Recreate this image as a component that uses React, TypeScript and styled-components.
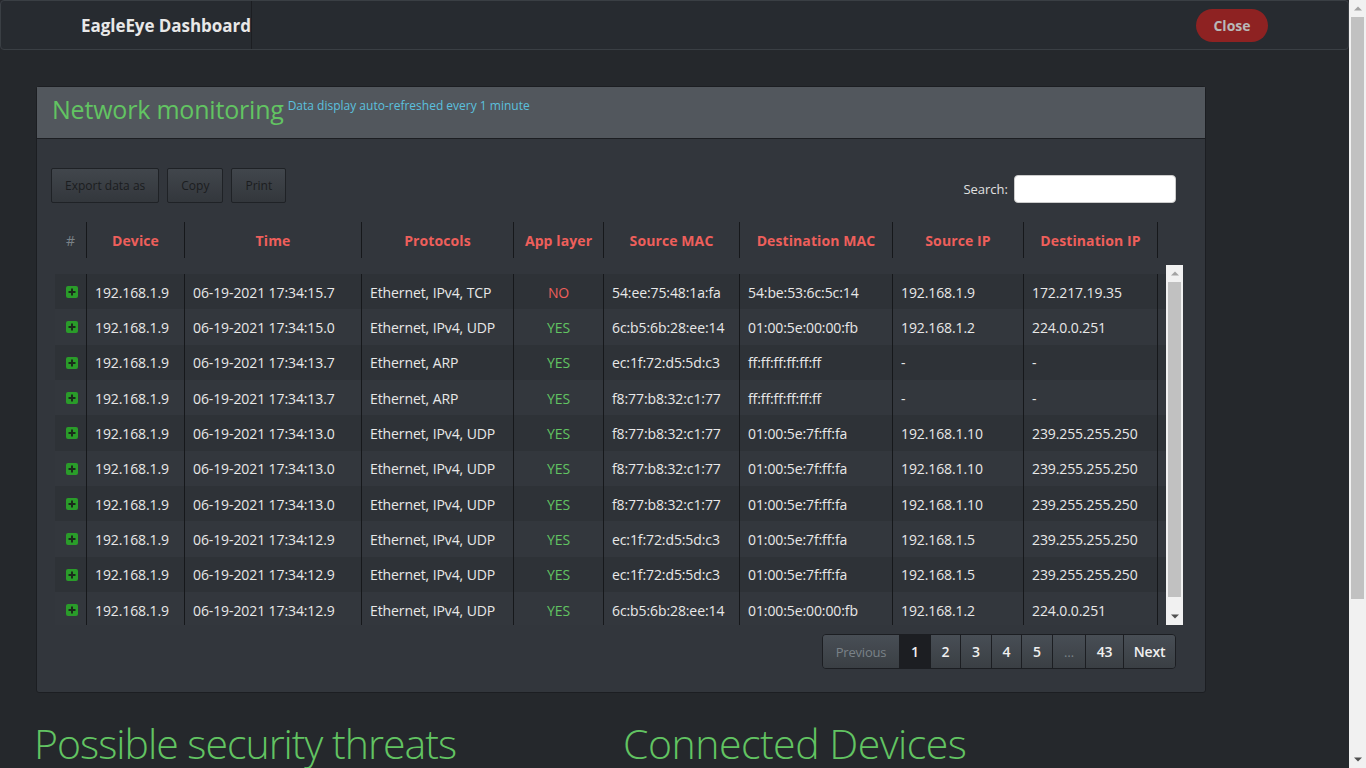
import React from 'react';
import styled, { createGlobalStyle } from 'styled-components';

const GlobalStyle = createGlobalStyle`
  *, *::before, *::after { box-sizing: border-box; }
  html, body {
    margin: 0;
    padding: 0;
    background: #25282c;
    font-family: "Open Sans", "Noto Sans", sans-serif;
    color: #e6e6e6;
    scrollbar-width: none;
  }
  ::-webkit-scrollbar { display: none; }
`;

const Viewport = styled.div`
  display: flex;
  align-items: flex-start;
`;

const Page = styled.div`
  flex: 1;
  min-width: 0;
`;

const Track = styled.div<{ $h: string }>`
  width: 17px;
  height: ${p => p.$h};
  flex-shrink: 0;
  display: flex;
  flex-direction: column;
  background: #f1f1f1;
`;

const PageTrack = styled(Track)`
  position: sticky;
  top: 0;
`;

const Arrow = styled.div`
  height: 17px;
  display: flex;
  align-items: center;
  justify-content: center;
`;

const ThumbArea = styled.div`
  flex: 1;
  padding: 0 2px;
`;

const Thumb = styled.div<{ $h: number }>`
  height: ${p => p.$h}px;
  background: #c1c1c1;
`;

const UpArrow = () => (
  <Arrow>
    <svg width="8" height="5" viewBox="0 0 8 5">
      <path d="M0 4.5L4 0.5L8 4.5Z" fill="#a3a3a3" />
    </svg>
  </Arrow>
);

const DownArrow = () => (
  <Arrow>
    <svg width="8" height="5" viewBox="0 0 8 5">
      <path d="M0 0.5L4 4.5L8 0.5Z" fill="#505050" />
    </svg>
  </Arrow>
);

const Navbar = styled.nav`
  height: 50px;
  display: flex;
  align-items: center;
  justify-content: space-between;
  padding: 0 80px;
  background: #272b30;
  border: 1px solid #3a3f44;
  border-radius: 4px;
`;

const Brand = styled.div`
  height: 48px;
  display: flex;
  align-items: center;
  border-right: 1px solid #1c1e22;
  font-size: 17px;
  font-weight: 700;
  letter-spacing: -0.05px;
  color: #e8e8e8;
`;

const CloseButton = styled.button`
  width: 72px;
  height: 33px;
  border: none;
  border-radius: 17px;
  background: #8e2222;
  color: #b8b8b8;
  font-family: inherit;
  font-size: 14px;
  font-weight: 700;
`;

const Main = styled.main`
  padding: 36px 0 0 36px;
  width: 1206px;
`;

const Panel = styled.section`
  border: 1px solid #1c1e22;
  border-radius: 3px;
  background: #32363c;
`;

const PanelHeader = styled.header`
  height: 52px;
  display: flex;
  align-items: flex-start;
  padding: 0 15px;
  background: #52575d;
  border-bottom: 1px solid #1c1e22;
`;

const Title = styled.h2`
  margin: 5px 0 0;
  font-size: 25px;
  font-weight: 400;
  letter-spacing: -0.2px;
  color: #62c462;
`;

const Subtitle = styled.span`
  margin: 10px 0 0 4px;
  font-size: 12px;
  color: #5bc0de;
`;

const PanelBody = styled.div`
  padding: 29px 29px 23px 14px;
`;

const Toolbar = styled.div`
  display: flex;
  align-items: center;
  justify-content: space-between;
  height: 35px;
`;

const ButtonGroup = styled.div`
  display: flex;
  gap: 8px;
`;

const ToolButton = styled.button`
  height: 35px;
  padding: 0 13px;
  border: 1px solid #1f2226;
  border-radius: 2px;
  background: linear-gradient(#41464c, #33373c);
  color: #1b1d20;
  font-family: inherit;
  font-size: 12px;
`;

const SearchLabel = styled.label`
  display: flex;
  align-items: center;
  gap: 6px;
  font-size: 13px;
  color: #e0e0e0;
  margin-top: 7px;
`;

const SearchInput = styled.input`
  width: 162px;
  height: 28px;
  border: 1px solid #ccc;
  border-radius: 4px;
  background: #fff;
  padding: 0;
`;

const COLS = '32px 98px 177px 152px 90px 136px 153px 131px 134px';

const HeadRow = styled.div`
  display: grid;
  grid-template-columns: ${COLS};
  margin: 19px 0 0 4px;
  height: 36px;
`;

const HeadCell = styled.div<{ $muted?: boolean }>`
  display: flex;
  align-items: center;
  justify-content: center;
  border-right: 1px solid #16181b;
  font-size: 14px;
  letter-spacing: 0.1px;
  color: ${p => (p.$muted ? '#7a8288' : '#ee5f5b')};
  font-weight: ${p => (p.$muted ? 400 : 700)};
`;

const ScrollBody = styled.div`
  display: flex;
  margin: 7px 0 0 4px;
  height: 360px;
  width: 1128px;
`;

const BodyInner = styled.div`
  flex: 1;
  padding-top: 9px;
  overflow: hidden;
`;

const Row = styled.div<{ $odd: boolean }>`
  display: grid;
  grid-template-columns: ${COLS};
  height: 35.33px;
  background: ${p => (p.$odd ? '#2e3237' : '#33373d')};
`;

const Cell = styled.div<{ $center?: boolean; $color?: string }>`
  display: flex;
  align-items: center;
  justify-content: ${p => (p.$center ? 'center' : 'flex-start')};
  padding-left: ${p => (p.$center ? '0' : '8px')};
  padding-top: 1px;
  border-right: 1px solid #16181b;
  font-size: 14px;
  letter-spacing: -0.1px;
  color: ${p => p.$color || '#e8e8e8'};
  white-space: nowrap;
`;

const IconCell = styled.div`
  display: flex;
  align-items: center;
  border-right: 1px solid #16181b;
`;

const PlusBox = styled.span`
  width: 12px;
  height: 12px;
  border-radius: 2px;
  background: #2a9c2a;
  display: flex;
  align-items: center;
  justify-content: center;
  margin: 1px 0 0 11px;
`;

const Pager = styled.div`
  display: flex;
  justify-content: flex-end;
  margin-top: 9px;
`;

const PageList = styled.div`
  display: flex;
  border: 1px solid #1c1e22;
  border-radius: 4px;
  overflow: hidden;
`;

const PageItem = styled.span<{ $active?: boolean; $disabled?: boolean; $w: number }>`
  width: ${p => p.$w}px;
  height: 33px;
  display: flex;
  align-items: center;
  justify-content: center;
  border-left: 1px solid #1c1e22;
  &:first-child { border-left: none; }
  background: ${p => (p.$active ? '#1c1e22' : 'linear-gradient(#484e55, #3a3f44)')};
  color: ${p => (p.$disabled ? '#7a8288' : '#f0f0f0')};
  font-size: ${p => (p.$disabled ? '13px' : '14px')};
  font-weight: ${p => (p.$disabled ? 400 : 600)};
  letter-spacing: -0.2px;
`;

const Sections = styled.div`
  display: flex;
  padding: 28px 0 200px 34px;
`;

const SectionTitle = styled.h2<{ $w: number; $ls: number }>`
  margin: 0;
  width: ${p => p.$w}px;
  font-size: 41px;
  font-weight: 300;
  letter-spacing: ${p => p.$ls}px;
  color: #62c462;
  white-space: nowrap;
  line-height: 1.1;
`;

type Rec = [string, string, string, boolean, string, string, string, string];

const rows: Rec[] = [
  ['192.168.1.9', '06-19-2021 17:34:15.7', 'Ethernet, IPv4, TCP', false, '54:ee:75:48:1a:fa', '54:be:53:6c:5c:14', '192.168.1.9', '172.217.19.35'],
  ['192.168.1.9', '06-19-2021 17:34:15.0', 'Ethernet, IPv4, UDP', true, '6c:b5:6b:28:ee:14', '01:00:5e:00:00:fb', '192.168.1.2', '224.0.0.251'],
  ['192.168.1.9', '06-19-2021 17:34:13.7', 'Ethernet, ARP', true, 'ec:1f:72:d5:5d:c3', 'ff:ff:ff:ff:ff:ff', '-', '-'],
  ['192.168.1.9', '06-19-2021 17:34:13.7', 'Ethernet, ARP', true, 'f8:77:b8:32:c1:77', 'ff:ff:ff:ff:ff:ff', '-', '-'],
  ['192.168.1.9', '06-19-2021 17:34:13.0', 'Ethernet, IPv4, UDP', true, 'f8:77:b8:32:c1:77', '01:00:5e:7f:ff:fa', '192.168.1.10', '239.255.255.250'],
  ['192.168.1.9', '06-19-2021 17:34:13.0', 'Ethernet, IPv4, UDP', true, 'f8:77:b8:32:c1:77', '01:00:5e:7f:ff:fa', '192.168.1.10', '239.255.255.250'],
  ['192.168.1.9', '06-19-2021 17:34:13.0', 'Ethernet, IPv4, UDP', true, 'f8:77:b8:32:c1:77', '01:00:5e:7f:ff:fa', '192.168.1.10', '239.255.255.250'],
  ['192.168.1.9', '06-19-2021 17:34:12.9', 'Ethernet, IPv4, UDP', true, 'ec:1f:72:d5:5d:c3', '01:00:5e:7f:ff:fa', '192.168.1.5', '239.255.255.250'],
  ['192.168.1.9', '06-19-2021 17:34:12.9', 'Ethernet, IPv4, UDP', true, 'ec:1f:72:d5:5d:c3', '01:00:5e:7f:ff:fa', '192.168.1.5', '239.255.255.250'],
  ['192.168.1.9', '06-19-2021 17:34:12.9', 'Ethernet, IPv4, UDP', true, '6c:b5:6b:28:ee:14', '01:00:5e:00:00:fb', '192.168.1.2', '224.0.0.251'],
];

const headers = ['Device', 'Time', 'Protocols', 'App layer', 'Source MAC', 'Destination MAC', 'Source IP', 'Destination IP'];

const pages: { label: string; w: number; active?: boolean; disabled?: boolean }[] = [
  { label: 'Previous', w: 76, disabled: true },
  { label: '1', w: 31, active: true },
  { label: '2', w: 30 },
  { label: '3', w: 31 },
  { label: '4', w: 30 },
  { label: '5', w: 31 },
  { label: '…', w: 33, disabled: true },
  { label: '43', w: 38 },
  { label: 'Next', w: 52 },
];

const Plus = () => (
  <PlusBox>
    <svg width="8" height="8" viewBox="0 0 8 8">
      <path d="M4 0.5v7M0.5 4h7" stroke="#1b2a1b" strokeWidth="2" />
    </svg>
  </PlusBox>
);

const App = () => (
  <Viewport>
    <GlobalStyle />
    <Page>
      <Navbar>
        <Brand>EagleEye Dashboard</Brand>
        <CloseButton>Close</CloseButton>
      </Navbar>
      <Main>
        <Panel>
          <PanelHeader>
            <Title>Network monitoring</Title>
            <Subtitle>Data display auto-refreshed every 1 minute</Subtitle>
          </PanelHeader>
          <PanelBody>
            <Toolbar>
              <ButtonGroup>
                <ToolButton>Export data as</ToolButton>
                <ToolButton>Copy</ToolButton>
                <ToolButton>Print</ToolButton>
              </ButtonGroup>
              <SearchLabel>
                Search:
                <SearchInput type="text" />
              </SearchLabel>
            </Toolbar>
            <HeadRow>
              <HeadCell $muted>#</HeadCell>
              {headers.map(h => (
                <HeadCell key={h}>{h}</HeadCell>
              ))}
            </HeadRow>
            <ScrollBody>
              <BodyInner>
                {rows.map((r, i) => (
                  <Row key={i} $odd={i % 2 === 0}>
                    <IconCell>
                      <Plus />
                    </IconCell>
                    <Cell>{r[0]}</Cell>
                    <Cell>{r[1]}</Cell>
                    <Cell>{r[2]}</Cell>
                    <Cell $center $color={r[3] ? '#62c462' : '#ee5f5b'}>
                      {r[3] ? 'YES' : 'NO'}
                    </Cell>
                    <Cell>{r[4]}</Cell>
                    <Cell>{r[5]}</Cell>
                    <Cell>{r[6]}</Cell>
                    <Cell>{r[7]}</Cell>
                  </Row>
                ))}
              </BodyInner>
              <Track $h="360px">
                <UpArrow />
                <ThumbArea>
                  <Thumb $h={315} />
                </ThumbArea>
                <DownArrow />
              </Track>
            </ScrollBody>
            <Pager>
              <PageList>
                {pages.map(p => (
                  <PageItem key={p.label} $w={p.w} $active={p.active} $disabled={p.disabled}>
                    {p.label}
                  </PageItem>
                ))}
              </PageList>
            </Pager>
          </PanelBody>
        </Panel>
      </Main>
      <Sections>
        <SectionTitle $w={589} $ls={-1}>Possible security threats</SectionTitle>
        <SectionTitle $w={500} $ls={-0.5}>Connected Devices</SectionTitle>
      </Sections>
    </Page>
    <PageTrack $h="100vh">
      <UpArrow />
      <ThumbArea>
        <Thumb $h={582} />
      </ThumbArea>
      <DownArrow />
    </PageTrack>
  </Viewport>
);

export default App;
